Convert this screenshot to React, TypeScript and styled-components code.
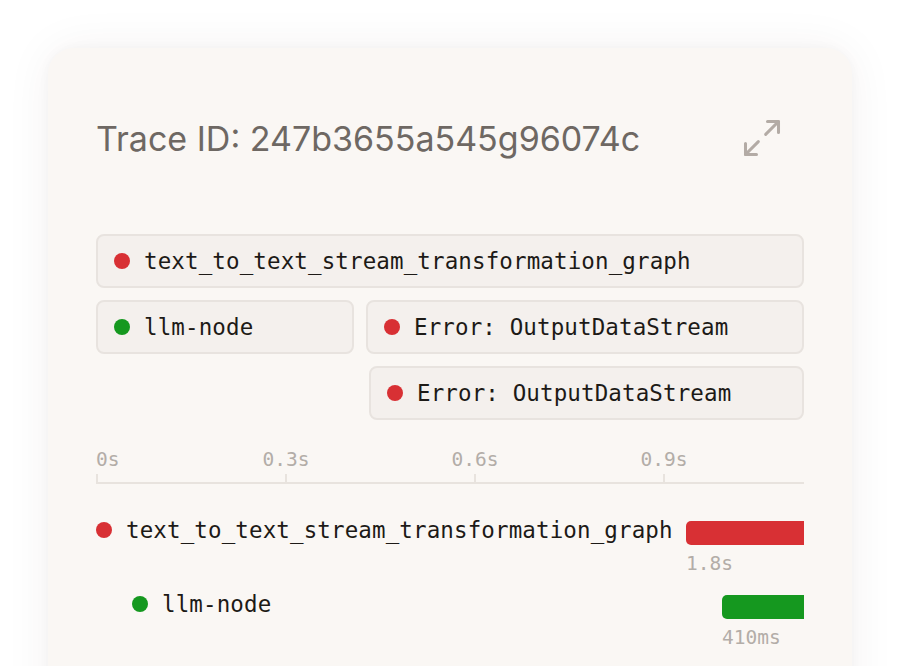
import React from "react";
import styled, { createGlobalStyle } from "styled-components";
import { Maximize2 } from "lucide-react";

const GlobalStyle = createGlobalStyle`
  html, body { margin: 0; padding: 0; background: #ffffff; }
  body { font-family: Inter, "Noto Sans", sans-serif; overflow: hidden; }
`;

const MONO = `"DejaVu Sans Mono", "Liberation Mono", monospace`;

const Page = styled.div`
  width: 900px;
  height: 666px;
  padding: 48px 0 0 48px;
  box-sizing: border-box;
  overflow: hidden;
`;

const Card = styled.div`
  width: 804px;
  height: 700px;
  box-sizing: border-box;
  padding: 48px 48px 0 48px;
  background: #faf7f4;
  border-radius: 26px;
  box-shadow: 0 0 48px rgba(60, 40, 20, 0.06), 0 0 12px rgba(60, 40, 20, 0.03);
  display: flex;
  flex-direction: column;
`;

const Header = styled.div`
  height: 84px;
  display: flex;
  align-items: center;
  justify-content: space-between;
`;

const Title = styled.h1`
  margin: 0;
  font-family: Inter, "Noto Sans", sans-serif;
  font-weight: 400;
  font-size: 34px;
  letter-spacing: 0;
  color: #6e6863;
`;

const IconButton = styled.div`
  width: 44px;
  height: 44px;
  margin-right: 20px;
  margin-top: -1px;
  color: #b3aba5;
  display: flex;
  align-items: center;
  justify-content: center;
`;

const ChipTree = styled.div`
  margin-top: 54px;
  display: flex;
  flex-direction: column;
  gap: 12px;
`;

const ChipRow = styled.div<{ $indent?: number }>`
  display: flex;
  gap: 12px;
  padding-left: ${(p) => p.$indent ?? 0}px;
`;

const Chip = styled.div<{ $width?: number }>`
  box-sizing: border-box;
  height: 54px;
  ${(p) => (p.$width ? `width: ${p.$width}px;` : "flex: 1;")}
  border: 2px solid #e8e3df;
  background: #f4f0ed;
  border-radius: 8px;
  padding: 0 16px;
  display: flex;
  align-items: center;
  gap: 14px;
  font-family: ${MONO};
  font-size: 22.5px;
  letter-spacing: 0.12px;
  color: #1d1a17;
`;

const Dot = styled.span<{ $color: string }>`
  flex: none;
  width: 16px;
  height: 16px;
  border-radius: 50%;
  background: ${(p) => p.$color};
`;

const Timeline = styled.div`
  margin-top: 28px;
  overflow: hidden;
`;

const AxisLabels = styled.div`
  position: relative;
  height: 24px;
`;

const AxisLabel = styled.span<{ $first?: boolean }>`
  position: absolute;
  top: 0;
  line-height: 24px;
  font-family: ${MONO};
  font-size: 19.5px;
  color: #b3ada8;
  transform: ${(p) => (p.$first ? "none" : "translateX(-50%)")};
`;

const Axis = styled.div`
  position: relative;
  height: 8px;
  margin-top: 2px;
  border-bottom: 2px solid #e8e3de;
`;

const Tick = styled.span`
  position: absolute;
  top: 0;
  bottom: 0;
  width: 2px;
  background: #e8e3de;
`;

const Rows = styled.div`
  margin-top: 37px;
  display: flex;
  flex-direction: column;
  gap: 19px;
`;

const Row = styled.div`
  display: grid;
`;

const RowName = styled.div<{ $depth: number }>`
  grid-area: 1 / 1;
  align-self: start;
  height: 24px;
  margin-top: -3px;
  padding-left: ${(p) => p.$depth * 36}px;
  display: flex;
  align-items: center;
  gap: 14px;
  font-family: ${MONO};
  font-size: 22.5px;
  letter-spacing: 0.12px;
  color: #1d1a17;
  white-space: nowrap;
`;

const BarGroup = styled.div`
  grid-area: 1 / 1;
  display: flex;
  flex-direction: column;
  gap: 8px;
`;

const Bar = styled.div<{ $color: string }>`
  height: 24px;
  border-radius: 5px;
  background: ${(p) => p.$color};
`;

const Duration = styled.span`
  line-height: 24px;
  margin-top: -1px;
  font-family: ${MONO};
  font-size: 19.5px;
  color: #b3ada8;
`;

const RED = "#d83034";
const GREEN = "#15981f";
const PX_PER_SEC = 630;

const ticks = [0, 0.3, 0.6, 0.9];

const spans = [
  { name: "text_to_text_stream_transformation_graph", color: RED, depth: 0, start: 0.9365, dur: 1.8, label: "1.8s" },
  { name: "llm-node", color: GREEN, depth: 1, start: 0.9937, dur: 0.41, label: "410ms" },
];

export default function App() {
  return (
    <Page>
      <GlobalStyle />
      <Card>
        <Header>
          <Title>Trace ID: 247b3655a545g96074c</Title>
          <IconButton>
            <Maximize2 size={44} strokeWidth={1.65} />
          </IconButton>
        </Header>

        <ChipTree>
          <ChipRow>
            <Chip>
              <Dot $color={RED} />
              text_to_text_stream_transformation_graph
            </Chip>
          </ChipRow>
          <ChipRow>
            <Chip $width={258}>
              <Dot $color={GREEN} />
              llm-node
            </Chip>
            <Chip>
              <Dot $color={RED} />
              Error: OutputDataStream
            </Chip>
          </ChipRow>
          <ChipRow $indent={273}>
            <Chip>
              <Dot $color={RED} />
              Error: OutputDataStream
            </Chip>
          </ChipRow>
        </ChipTree>

        <Timeline>
          <AxisLabels>
            {ticks.map((t, i) => (
              <AxisLabel key={t} $first={i === 0} style={{ left: t * PX_PER_SEC + (i === 0 ? 0 : 1) }}>
                {t === 0 ? "0s" : `${t}s`}
              </AxisLabel>
            ))}
          </AxisLabels>
          <Axis>
            {ticks.map((t) => (
              <Tick key={t} style={{ left: t * PX_PER_SEC }} />
            ))}
          </Axis>
          <Rows>
            {spans.map((s) => (
              <Row key={s.name}>
                <RowName $depth={s.depth}>
                  <Dot $color={s.color} />
                  {s.name}
                </RowName>
                <BarGroup style={{ marginLeft: s.start * PX_PER_SEC }}>
                  <Bar $color={s.color} style={{ width: s.dur * PX_PER_SEC }} />
                  <Duration>{s.label}</Duration>
                </BarGroup>
              </Row>
            ))}
          </Rows>
        </Timeline>
      </Card>
    </Page>
  );
}
